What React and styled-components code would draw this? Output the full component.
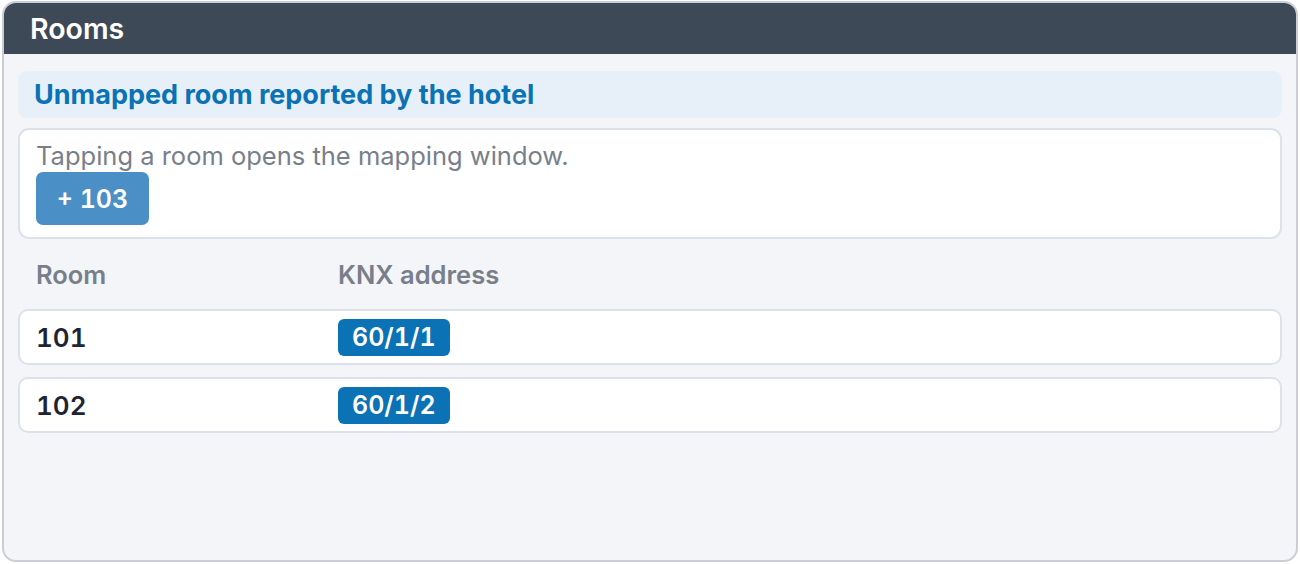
import React from 'react';
import styled, { createGlobalStyle } from 'styled-components';

const GlobalStyle = createGlobalStyle`
  html, body {
    margin: 0;
    padding: 0;
    background: #ffffff;
    font-family: Inter, "Noto Sans", sans-serif;
  }
  * { box-sizing: border-box; }
`;

const Panel = styled.div`
  margin: 1px 2px 0 2px;
  height: 561px;
  border: 2px solid #c9ced8;
  border-radius: 14px;
  background: #f3f5f8;
  overflow: hidden;
  display: flex;
  flex-direction: column;
`;

const Header = styled.div`
  background: #3e4958;
  height: 51px;
  padding: 0 26px;
  display: flex;
  align-items: center;
  color: #ffffff;
  font-size: 28.5px;
  font-weight: 600;
`;

const Body = styled.div`
  padding: 17px 14px 0 14px;
  display: flex;
  flex-direction: column;
`;

const SectionTitle = styled.div`
  background: #e7f0f8;
  border-radius: 9px;
  height: 47px;
  padding: 0 16px;
  display: flex;
  align-items: center;
  color: #0a72b5;
  font-size: 27px;
  font-weight: 700;
`;

const Card = styled.div`
  margin-top: 10px;
  background: #ffffff;
  border: 2px solid #dde2ea;
  border-radius: 11px;
  padding: 10px 16px 12px 16px;
  display: flex;
  flex-direction: column;
  align-items: flex-start;
`;

const Hint = styled.div`
  color: #787f8b;
  font-size: 25.5px;
  line-height: 32px;
`;

const RoomButton = styled.button`
  border: none;
  background: #4a8fc6;
  color: #ffffff;
  border-radius: 7px;
  width: 113px;
  height: 53px;
  font-family: inherit;
  font-size: 25px;
  font-weight: 600;
  font-variant-numeric: tabular-nums;
  cursor: pointer;
`;

const Columns = styled.div`
  display: grid;
  grid-template-columns: 302px 1fr;
  padding: 0 18px;
  height: 70px;
  align-items: center;
  color: #787f8b;
  font-size: 25.5px;
  font-weight: 600;
`;

const Rows = styled.div`
  display: flex;
  flex-direction: column;
  gap: 12px;
`;

const Row = styled.div`
  display: grid;
  grid-template-columns: 302px 1fr;
  align-items: center;
  height: 56px;
  padding: 0 16px;
  background: #ffffff;
  border: 2px solid #dde2ea;
  border-radius: 10px;
`;

const RoomNumber = styled.div`
  color: #1e2432;
  font-size: 26px;
  font-weight: 600;
  font-variant-numeric: tabular-nums;
`;

const Address = styled.span`
  justify-self: start;
  background: #0a72b5;
  color: #ffffff;
  border-radius: 6px;
  padding: 0 14px;
  height: 37px;
  display: flex;
  align-items: center;
  font-size: 25px;
  font-weight: 600;
  font-variant-numeric: tabular-nums;
`;

const rooms = [
  { room: '101', knx: '60/1/1' },
  { room: '102', knx: '60/1/2' },
];

export default function App() {
  return (
    <>
      <GlobalStyle />
      <Panel>
        <Header>Rooms</Header>
        <Body>
          <SectionTitle>Unmapped room reported by the hotel</SectionTitle>
          <Card>
            <Hint>Tapping a room opens the mapping window.</Hint>
            <RoomButton>+ 103</RoomButton>
          </Card>
          <Columns>
            <span>Room</span>
            <span>KNX address</span>
          </Columns>
          <Rows>
            {rooms.map((r) => (
              <Row key={r.room}>
                <RoomNumber>{r.room}</RoomNumber>
                <div>
                  <Address>{r.knx}</Address>
                </div>
              </Row>
            ))}
          </Rows>
        </Body>
      </Panel>
    </>
  );
}
